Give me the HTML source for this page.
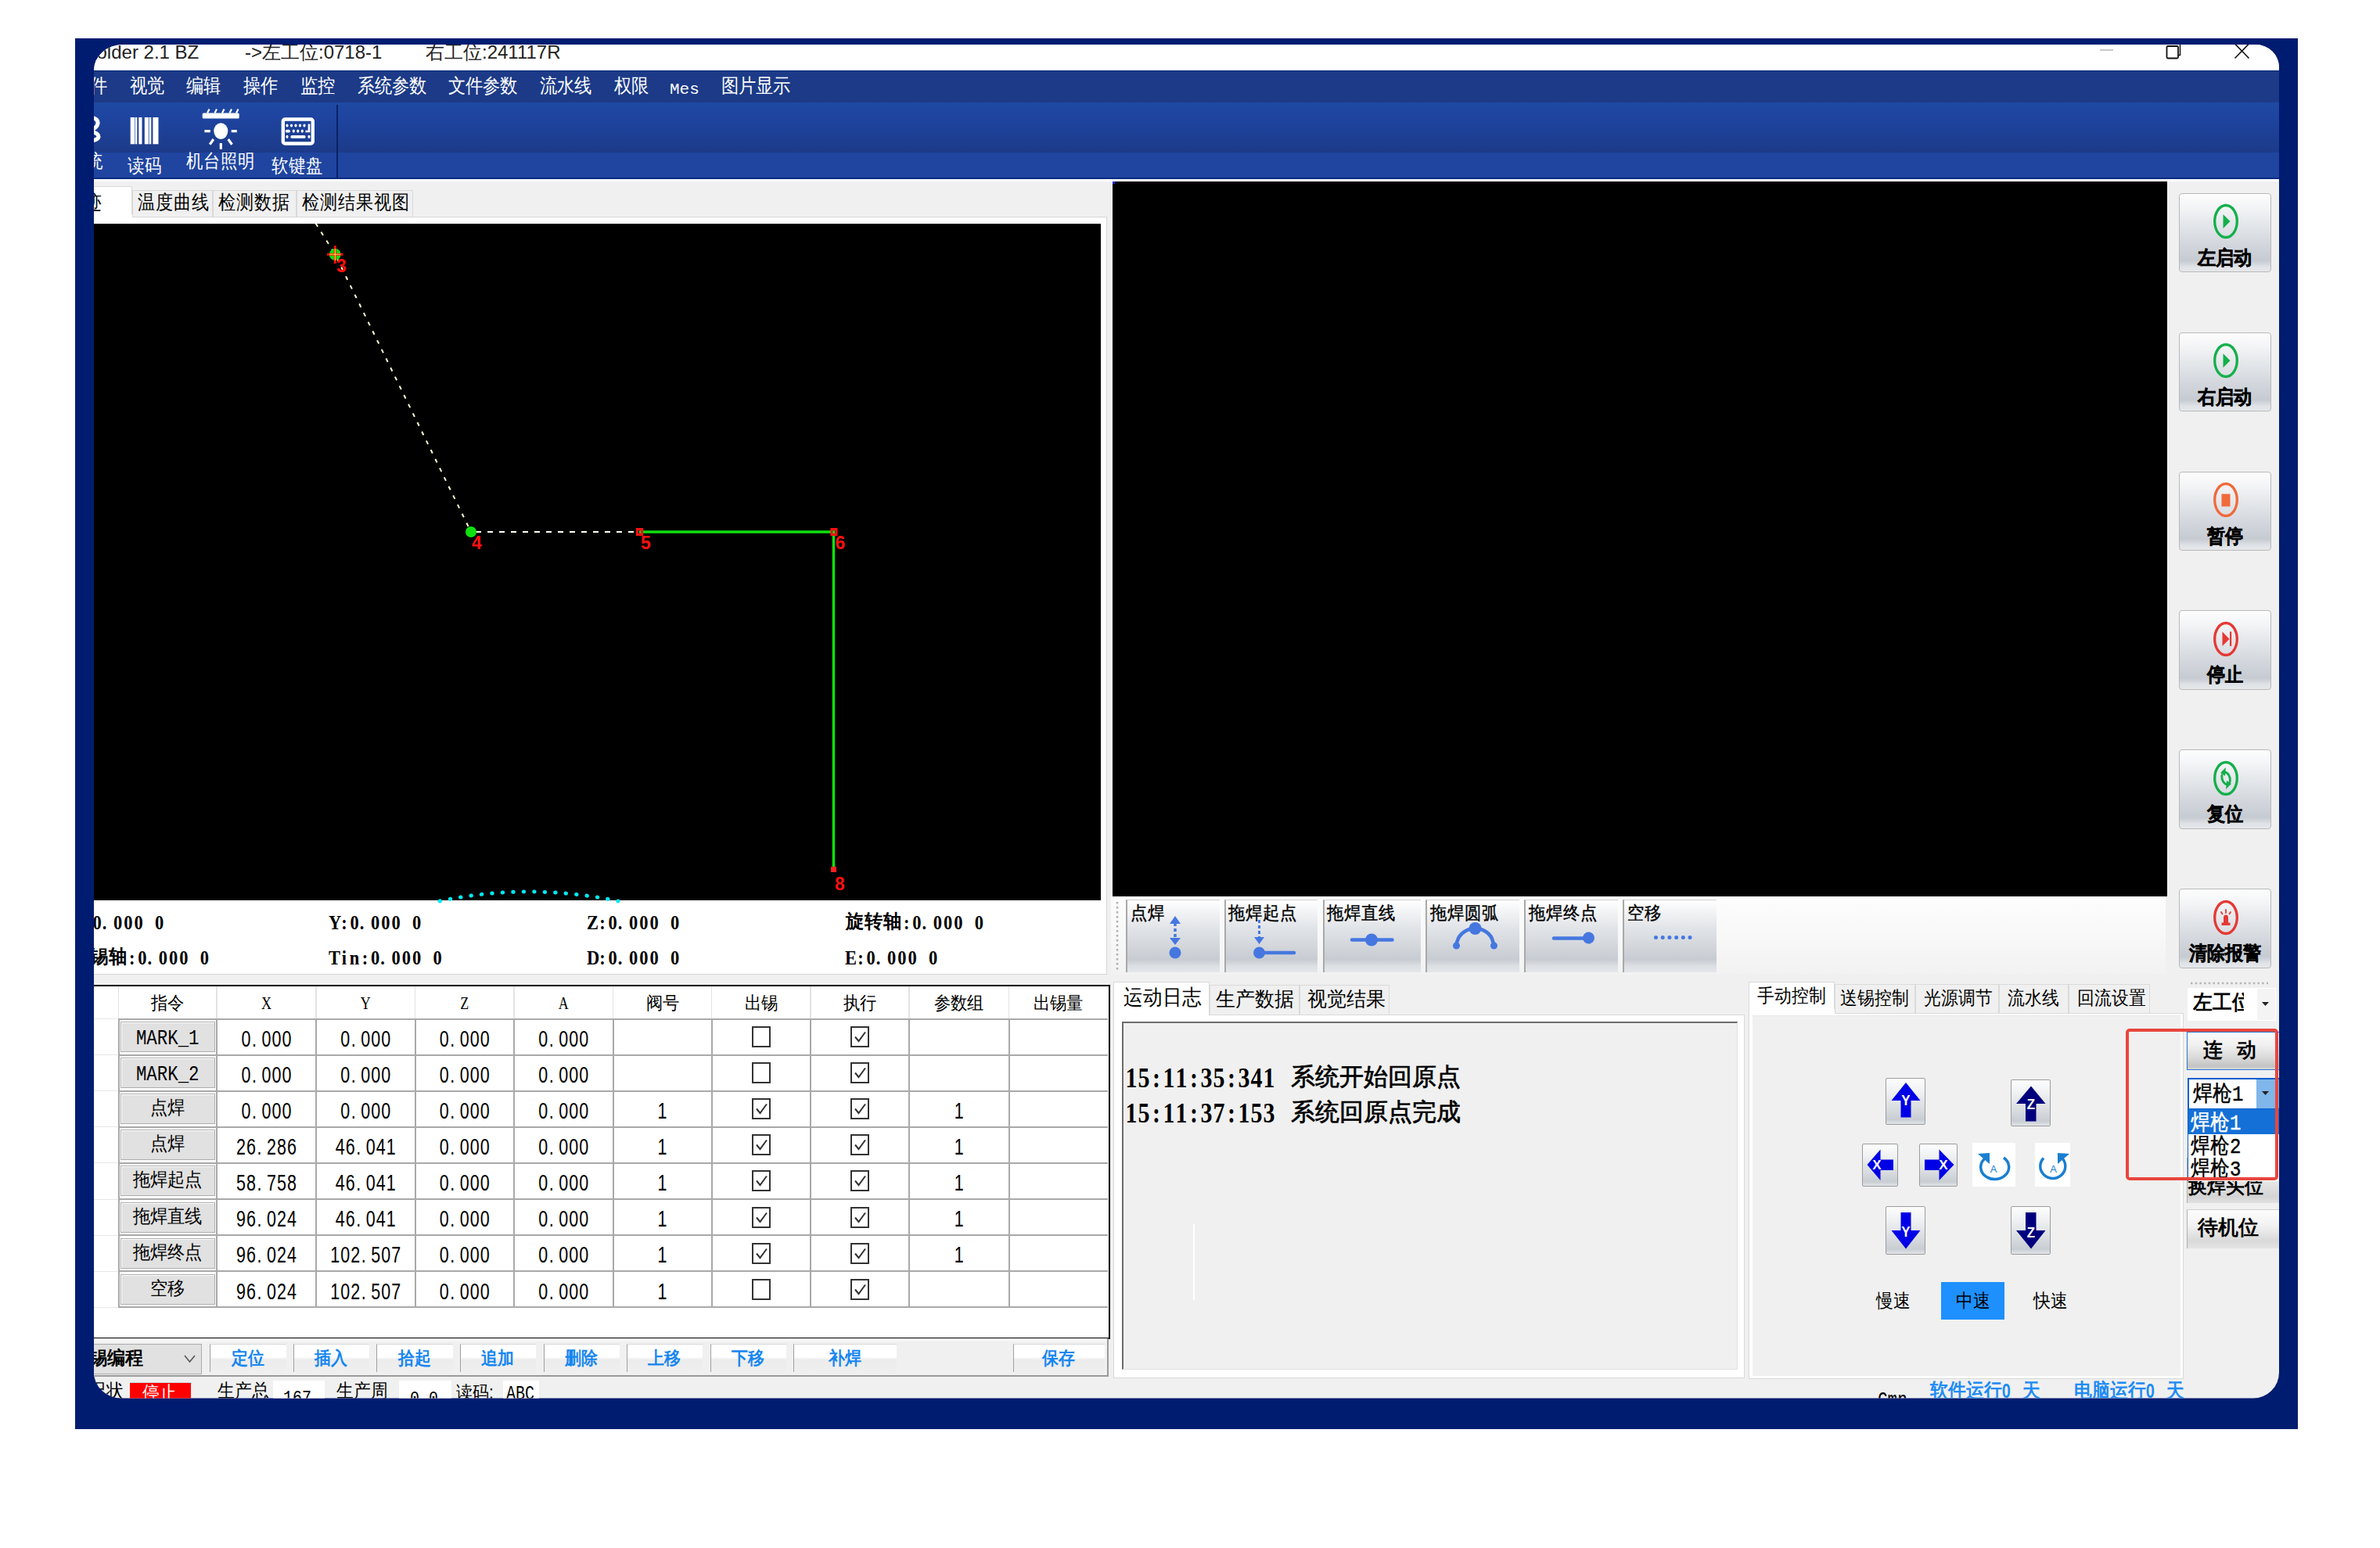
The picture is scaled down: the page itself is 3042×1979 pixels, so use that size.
<!DOCTYPE html>
<html><head><meta charset="utf-8">
<style>
*{box-sizing:border-box;margin:0;padding:0}
html,body{width:3042px;height:1979px;background:#fff;overflow:hidden;font-family:"Liberation Sans",sans-serif;color:#000}
.a{position:absolute;white-space:nowrap}
#frame{left:96px;top:49px;width:2841px;height:1778px;background:#001c70}
#app{left:0;top:0;width:3042px;height:1979px;background:#f0f0f0;clip-path:inset(57px 129px 191.5px 120px round 37px 30px 33px 35px / 33px 29px 33px 33px)}
.t{line-height:1}
.menu span{position:absolute;top:97.5px;font-size:22px;color:#fff;line-height:1;transform:scaleY(1.12);transform-origin:0 0}
.tl{position:absolute;color:#fff;font-size:21.5px;line-height:1;transform:scaleY(1.12);transform-origin:0 0}
.btn{position:absolute;border:1px solid #b4b4b4;border-radius:3px;background:linear-gradient(#fefefe 0%,#eceef1 35%,#d3d7dc 70%,#c4c9d0 88%,#e2e4e8 100%)}

.tabtxt{position:absolute;font-size:22.5px;line-height:1;transform:scaleY(1.13);transform-origin:0 0}
.tab{position:absolute;background:#f0f0f0;border:1px solid #d9d9d9;border-bottom:none}
.crd{position:absolute;font-family:"Liberation Serif",serif;font-weight:bold;font-size:22.5px;line-height:1;transform:scaleY(1.16);transform-origin:0 0;top:0}
.crd i{font-style:normal;display:inline-block;width:13.25px;text-align:center}
.cell{position:absolute;text-align:center;line-height:1}
.num{font-family:"Liberation Sans",sans-serif;font-size:21.5px;display:inline-block;transform:scaleY(1.34);transform-origin:50% 0}
.num i{font-style:normal;display:inline-block;width:13px;text-align:center}
.num i.d{text-align:left;padding-left:1px}
.hdr{font-size:21px;display:inline-block;transform:scaleY(1.08);transform-origin:50% 0}
.cmd{position:absolute;background:#e1e1e1;border:1.5px solid #adadad;box-shadow:inset 1px 1px 0 #fff}
.cmdt{font-size:22px;display:inline-block;transform:scaleY(1.08);transform-origin:50% 0}
.chk{position:absolute;width:24px;height:27px;border:2px solid #333;background:#fff}
.bb{position:absolute;top:1717.5px;height:36.5px;border-left:1.5px solid #a0a0a0;border-top:1.5px solid #d8d8d8;background:linear-gradient(#fff 0%,#fff 45%,#ececec 55%,#efefef 100%)}
.bbt{position:absolute;top:1723.5px;color:#1787f0;font-weight:bold;font-size:21px;line-height:1;transform:scaleY(1.1);transform-origin:0 0}

.rb{position:absolute;left:2784.5px;width:118px;height:101.5px;border:1.5px solid #b9b9b9;border-radius:4px;background:linear-gradient(#fdfdfd 0%,#f3f4f6 18%,#e3e6ea 40%,#d3d7dd 65%,#c6cbd2 86%,#dfe2e6 94%,#e6e8eb 100%)}
.rbt{position:absolute;font-weight:bold;-webkit-text-stroke:0.4px #000;font-size:23px;line-height:1;transform:scaleY(1.08);transform-origin:0 0;text-align:center;width:118px;left:2784.5px}
.wb{position:absolute;top:1150px;height:93px;border-left:2px solid #a9a9a9;border-top:1.5px solid #d0d0d0;background:linear-gradient(#ffffff 0%,#f3f4f6 15%,#e0e3e7 40%,#d2d6db 65%,#c7ccd2 82%,#dde0e4 92%,#e4e6e9 100%)}
.wbt{position:absolute;top:1157px;font-size:21.5px;line-height:1;transform:scaleY(1.08);transform-origin:0 0;-webkit-text-stroke:0.35px #000}
.mtab{position:absolute;background:#f0f0f0;border:1px solid #dadada;border-bottom:none}
.mtt{position:absolute;font-size:22.5px;line-height:1;transform:scaleY(1.1);transform-origin:0 0}
.ab{position:absolute;border:1px solid #9c9c9c;border-radius:2px;background:linear-gradient(#fdfdfd 0%,#eef0f2 30%,#d6dade 70%,#c8cdd3 90%,#e2e5e8 100%)}
</style></head><body>
<div class="a" id="frame"></div>
<div class="a" id="app">
<div class="a" style="left:0;top:0;width:3042px;height:90px;background:#fff"></div>
<div class="a t" style="left:107.5px;top:54.5px;font-size:24px;color:#222">Solder 2.1 BZ</div>
<div class="a t" style="left:313px;top:54.5px;font-size:24px;color:#222">->左工位:0718-1</div>
<div class="a t" style="left:544px;top:54.5px;font-size:24px;color:#222">右工位:241117R</div>
<div class="a" style="left:2684px;top:63px;width:17px;height:2px;background:#c8c8c8"></div>
<svg class="a" style="left:2760px;top:50px" width="40" height="30"><rect x="9.5" y="9" width="14.5" height="15.5" rx="1.5" fill="none" stroke="#111" stroke-width="1.8"/><path d="M24 4 L26.5 4 L26.5 20.5 L24 20.5" fill="none" stroke="#111" stroke-width="1.5"/></svg>
<svg class="a" style="left:2850px;top:50px" width="30" height="30"><path d="M6.5 24.5 L24.5 6 M6.5 6 L24.5 24.5" stroke="#111" stroke-width="1.6"/></svg>
<div class="a" style="left:0;top:89.5px;width:3042px;height:41.5px;background:#1c3a87;border-top:1.5px solid #062878"></div>
<div class="menu">
<span style="left:93px">文件</span>
<span style="left:166px">视觉</span>
<span style="left:238px">编辑</span>
<span style="left:311px">操作</span>
<span style="left:384px">监控</span>
<span style="left:457px">系统参数</span>
<span style="left:573px">文件参数</span>
<span style="left:690px">流水线</span>
<span style="left:785px">权限</span>
<span style="left:922px">图片显示</span>
<span style="left:856px;top:103.5px;font-family:'Liberation Mono';font-size:21px;transform:scaleY(1.0)">Mes</span>
</div>
<div class="a" style="left:0;top:131px;width:3042px;height:63.5px;background:linear-gradient(#1f49a2,#1e44a0 30%,#1c3a88)"></div>
<div class="a" style="left:0;top:194.5px;width:3042px;height:34px;background:#1f45a0;border-bottom:2px solid #0a2a80"></div>
<div class="a" style="left:0;top:228.5px;width:3042px;height:3.5px;background:#fff"></div>
<div class="a" style="left:430px;top:134px;width:1.5px;height:94px;background:#0b2266"></div>
<svg class="a" style="left:100px;top:148px" width="30" height="34"><path d="M6 3 C16 0 26 3 25 10 C24 15 20 17 12 19 M8 21 C18 19 26 22 26 27 C25 32 14 33 6 31" fill="none" stroke="#fff" stroke-width="5"/></svg>
<div class="tl" style="left:110px;top:195px">统</div>
<svg class="a" style="left:166px;top:150px" width="38" height="35"><g fill="#fff"><rect x="0.7" y="0" width="5.5" height="34.3"/><rect x="6.8" y="0" width="2.5" height="34.3"/><rect x="11.3" y="0" width="4.2" height="34.3"/><rect x="18.8" y="0" width="5" height="34.3"/><rect x="24.6" y="0" width="2.7" height="34.3"/><rect x="29.4" y="0" width="7.1" height="34.3"/></g></svg>
<div class="tl" style="left:163px;top:201px">读码</div>
<svg class="a" style="left:250px;top:135px" width="60" height="60"><g fill="#fff" stroke="#fff"><rect x="8.7" y="9.4" width="47" height="7" rx="1.5" stroke="none"/><path d="M15 9.5 L17.5 4.5 M24.5 9.5 L27 4.5 M34 9.5 L36.5 4.5 M43.5 9.5 L46 4.5 M52 9.5 L54.5 4.5" stroke-width="2.2"/><ellipse cx="32.3" cy="32.6" rx="9" ry="10.3" stroke="none"/><path d="M11.4 32.6 L18.8 32.6 M45.7 32.6 L52.8 32.6 M18.2 49.7 L22.9 43 M46.5 49.7 L41.7 43 M32.3 48 L32.3 55.8" stroke-width="3.2"/></g></svg>
<div class="tl" style="left:238px;top:194.5px">机台照明</div>
<svg class="a" style="left:350px;top:140px" width="60" height="52"><rect x="11.8" y="12.5" width="38" height="31" rx="2.5" fill="none" stroke="#fff" stroke-width="4.4"/><g fill="#fff"><ellipse cx="17" cy="20.5" rx="1.6" ry="2.1"/><ellipse cx="22.5" cy="20.5" rx="1.6" ry="2.1"/><ellipse cx="28" cy="20.5" rx="1.6" ry="2.1"/><ellipse cx="33.5" cy="20.5" rx="1.6" ry="2.1"/><ellipse cx="39" cy="20.5" rx="1.6" ry="2.1"/><rect x="14.8" y="25.8" width="6" height="3.6" rx="1.5"/><ellipse cx="25.3" cy="27.6" rx="1.6" ry="2.1"/><ellipse cx="30.8" cy="27.6" rx="1.6" ry="2.1"/><ellipse cx="36.3" cy="27.6" rx="1.6" ry="2.1"/><ellipse cx="17" cy="34.8" rx="1.6" ry="2.1"/><rect x="21.5" y="33" width="19" height="3.8" rx="1.5"/><ellipse cx="45" cy="34.8" rx="1.6" ry="2.1"/></g><path d="M45 18.5 L45 28 L40.5 28" fill="none" stroke="#fff" stroke-width="2.6"/></svg>
<div class="tl" style="left:347px;top:201px">软键盘</div>
<div class="a" style="left:120px;top:238px;width:49px;height:42px;background:#fff;border-top:1px solid #d9d9d9;border-right:1px solid #d9d9d9"></div>
<div class="tabtxt" style="left:85px;top:246.5px">轨迹</div>
<div class="tab" style="left:169px;top:242.5px;width:103px;height:35.5px"></div>
<div class="tabtxt" style="left:176px;top:247px">温度曲线</div>
<div class="tab" style="left:272px;top:242.5px;width:106.5px;height:35.5px"></div>
<div class="tabtxt" style="left:279px;top:247px">检测数据</div>
<div class="tab" style="left:378.5px;top:242.5px;width:149.0px;height:35.5px"></div>
<div class="tabtxt" style="left:385.5px;top:247px">检测结果视图</div>
<div class="a" style="left:110px;top:277px;width:1304.5px;height:969px;background:#fff;border:1px solid #d6d6d6"></div>
<div class="a" style="left:120px;top:274px;width:48.5px;height:6px;background:#fff"></div>
<div class="a" style="left:110px;top:285.5px;width:1297px;height:865.5px;background:#000"></div>
<svg class="a" style="left:0;top:0" width="1420" height="1160">
<g fill="none">
<path d="M403.5 285.5 L428.3 325.2 L602 680" stroke="#ffffd0" stroke-width="2" stroke-dasharray="5 8"/>
<path d="M608 680 L815 680" stroke="#fffff0" stroke-width="2.2" stroke-dasharray="7 8"/>
<path d="M817 680 L1065.5 680 L1065.5 1112" stroke="#10e010" stroke-width="3.5"/>
<path d="M562 1152 Q 675 1128 790 1152" stroke="#00e8f0" stroke-width="5" stroke-dasharray="0.5 13" stroke-linecap="round"/>
</g>
<circle cx="428.3" cy="325.2" r="7.5" fill="#10e010"/>
<path d="M418 325.2 L438.5 325.2 M428.3 314 L428.3 337" stroke="#ff0a0a" stroke-width="3"/>
<path d="M421 325.2 L435.5 325.2 M428.3 318 L428.3 333" stroke="#ffff40" stroke-width="1"/>
<circle cx="602" cy="680" r="7" fill="#10e010"/>
<rect x="814.5" y="676.5" width="6" height="7" fill="none" stroke="#ff1010" stroke-width="3"/>
<rect x="1063" y="676.5" width="6" height="7" fill="none" stroke="#ff1010" stroke-width="3"/>
<rect x="1062" y="1108" width="7" height="7" fill="#ff2020"/>
<g fill="#ff1010" font-family="Liberation Sans" font-weight="bold" font-size="23">
<text x="430" y="347.5">3</text><text x="603" y="701.5">4</text><text x="819" y="701.5">5</text><text x="1067.5" y="701.5">6</text><text x="1067" y="1137.5">8</text>
</g>
</svg>
<div class="a" style="left:91px;top:1171.5px;line-height:1"><span class="crd" style="left:0.0px;top:-4.5px"><i>X</i><i>:</i><i>0</i><i style="text-align:left">.</i><i>0</i><i>0</i><i>0</i><i>&nbsp;</i><i>0</i></span></div>
<div class="a" style="left:420px;top:1171.5px;line-height:1"><span class="crd" style="left:0.0px;top:-4.5px"><i>Y</i><i>:</i><i>0</i><i style="text-align:left">.</i><i>0</i><i>0</i><i>0</i><i>&nbsp;</i><i>0</i></span></div>
<div class="a" style="left:750px;top:1171.5px;line-height:1"><span class="crd" style="left:0.0px;top:-4.5px"><i>Z</i><i>:</i><i>0</i><i style="text-align:left">.</i><i>0</i><i>0</i><i>0</i><i>&nbsp;</i><i>0</i></span></div>
<div class="a" style="left:1081px;top:1171.5px;line-height:1"><span style="position:absolute;left:0;top:-6px;font-size:23.5px;font-weight:bold;line-height:1;transform:scaleY(1.03);transform-origin:0 0">旋转轴</span><span class="crd" style="left:71.1px;top:-4.5px"><i>:</i><i>0</i><i style="text-align:left">.</i><i>0</i><i>0</i><i>0</i><i>&nbsp;</i><i>0</i></span></div>
<div class="a" style="left:91px;top:1216.5px;line-height:1"><span style="position:absolute;left:0;top:-6px;font-size:23.5px;font-weight:bold;line-height:1;transform:scaleY(1.03);transform-origin:0 0">出锡轴</span><span class="crd" style="left:71.1px;top:-4.5px"><i>:</i><i>0</i><i style="text-align:left">.</i><i>0</i><i>0</i><i>0</i><i>&nbsp;</i><i>0</i></span></div>
<div class="a" style="left:420px;top:1216.5px;line-height:1"><span class="crd" style="left:0.0px;top:-4.5px"><i>T</i><i>i</i><i>n</i><i>:</i><i>0</i><i style="text-align:left">.</i><i>0</i><i>0</i><i>0</i><i>&nbsp;</i><i>0</i></span></div>
<div class="a" style="left:750px;top:1216.5px;line-height:1"><span class="crd" style="left:0.0px;top:-4.5px"><i>D</i><i>:</i><i>0</i><i style="text-align:left">.</i><i>0</i><i>0</i><i>0</i><i>&nbsp;</i><i>0</i></span></div>
<div class="a" style="left:1080px;top:1216.5px;line-height:1"><span class="crd" style="left:0.0px;top:-4.5px"><i>E</i><i>:</i><i>0</i><i style="text-align:left">.</i><i>0</i><i>0</i><i>0</i><i>&nbsp;</i><i>0</i></span></div>
<div class="a" style="left:110px;top:1246px;width:1310px;height:12.5px;background:#f0f0f0"></div>
<div class="a" style="left:100px;top:1258.5px;width:1318.5px;height:1453px;height:453px;background:#fff;border:2.5px solid #000"></div>
<div class="a" style="left:150.5px;top:1261px;width:1.5px;height:41px;background:#e3e3e3"></div>
<div class="a" style="left:276px;top:1261px;width:1.5px;height:41px;background:#e3e3e3"></div>
<div class="a" style="left:403px;top:1261px;width:1.5px;height:41px;background:#e3e3e3"></div>
<div class="a" style="left:529.5px;top:1261px;width:1.5px;height:41px;background:#e3e3e3"></div>
<div class="a" style="left:656px;top:1261px;width:1.5px;height:41px;background:#e3e3e3"></div>
<div class="a" style="left:782.5px;top:1261px;width:1.5px;height:41px;background:#e3e3e3"></div>
<div class="a" style="left:908.5px;top:1261px;width:1.5px;height:41px;background:#e3e3e3"></div>
<div class="a" style="left:1035px;top:1261px;width:1.5px;height:41px;background:#e3e3e3"></div>
<div class="a" style="left:1161px;top:1261px;width:1.5px;height:41px;background:#e3e3e3"></div>
<div class="a" style="left:1288.5px;top:1261px;width:1.5px;height:41px;background:#e3e3e3"></div>
<div class="a" style="left:151px;top:1301.5px;width:1265px;height:2px;background:#a9a9a9"></div>
<div class="a" style="left:110px;top:1302.0px;width:41px;height:1px;background:#e6e6e6"></div>
<div class="a" style="left:151px;top:1347.6px;width:1265px;height:2px;background:#a9a9a9"></div>
<div class="a" style="left:110px;top:1348.1px;width:41px;height:1px;background:#e6e6e6"></div>
<div class="a" style="left:151px;top:1393.7px;width:1265px;height:2px;background:#a9a9a9"></div>
<div class="a" style="left:110px;top:1394.2px;width:41px;height:1px;background:#e6e6e6"></div>
<div class="a" style="left:151px;top:1439.8px;width:1265px;height:2px;background:#a9a9a9"></div>
<div class="a" style="left:110px;top:1440.3px;width:41px;height:1px;background:#e6e6e6"></div>
<div class="a" style="left:151px;top:1485.9px;width:1265px;height:2px;background:#a9a9a9"></div>
<div class="a" style="left:110px;top:1486.4px;width:41px;height:1px;background:#e6e6e6"></div>
<div class="a" style="left:151px;top:1532.0px;width:1265px;height:2px;background:#a9a9a9"></div>
<div class="a" style="left:110px;top:1532.5px;width:41px;height:1px;background:#e6e6e6"></div>
<div class="a" style="left:151px;top:1578.1px;width:1265px;height:2px;background:#a9a9a9"></div>
<div class="a" style="left:110px;top:1578.6px;width:41px;height:1px;background:#e6e6e6"></div>
<div class="a" style="left:151px;top:1624.2px;width:1265px;height:2px;background:#a9a9a9"></div>
<div class="a" style="left:110px;top:1624.7px;width:41px;height:1px;background:#e6e6e6"></div>
<div class="a" style="left:151px;top:1670.3px;width:1265px;height:2px;background:#a9a9a9"></div>
<div class="a" style="left:110px;top:1670.8px;width:41px;height:1px;background:#e6e6e6"></div>
<div class="a" style="left:150.5px;top:1302.5px;width:2px;height:368.8px;background:#a9a9a9"></div>
<div class="a" style="left:276px;top:1302.5px;width:2px;height:368.8px;background:#a9a9a9"></div>
<div class="a" style="left:403px;top:1302.5px;width:2px;height:368.8px;background:#a9a9a9"></div>
<div class="a" style="left:529.5px;top:1302.5px;width:2px;height:368.8px;background:#a9a9a9"></div>
<div class="a" style="left:656px;top:1302.5px;width:2px;height:368.8px;background:#a9a9a9"></div>
<div class="a" style="left:782.5px;top:1302.5px;width:2px;height:368.8px;background:#a9a9a9"></div>
<div class="a" style="left:908.5px;top:1302.5px;width:2px;height:368.8px;background:#a9a9a9"></div>
<div class="a" style="left:1035px;top:1302.5px;width:2px;height:368.8px;background:#a9a9a9"></div>
<div class="a" style="left:1161px;top:1302.5px;width:2px;height:368.8px;background:#a9a9a9"></div>
<div class="a" style="left:1288.5px;top:1302.5px;width:2px;height:368.8px;background:#a9a9a9"></div>
<div class="cell" style="left:151.5px;top:1270.5px;width:125.5px"><span class="hdr">指令</span></div>
<div class="cell" style="left:277px;top:1271.4px;width:127px"><span style="font-family:Liberation Serif,serif;font-size:18px;display:inline-block;transform:scaleY(1.27);transform-origin:50% 0">X</span></div>
<div class="cell" style="left:404px;top:1271.4px;width:126.5px"><span style="font-family:Liberation Serif,serif;font-size:18px;display:inline-block;transform:scaleY(1.27);transform-origin:50% 0">Y</span></div>
<div class="cell" style="left:530.5px;top:1271.4px;width:126.5px"><span style="font-family:Liberation Serif,serif;font-size:18px;display:inline-block;transform:scaleY(1.27);transform-origin:50% 0">Z</span></div>
<div class="cell" style="left:657px;top:1271.4px;width:126.5px"><span style="font-family:Liberation Serif,serif;font-size:18px;display:inline-block;transform:scaleY(1.27);transform-origin:50% 0">A</span></div>
<div class="cell" style="left:783.5px;top:1270.5px;width:126.0px"><span class="hdr">阀号</span></div>
<div class="cell" style="left:909.5px;top:1270.5px;width:126.5px"><span class="hdr">出锡</span></div>
<div class="cell" style="left:1036px;top:1270.5px;width:126px"><span class="hdr">执行</span></div>
<div class="cell" style="left:1162px;top:1270.5px;width:127.5px"><span class="hdr">参数组</span></div>
<div class="cell" style="left:1289.5px;top:1270.5px;width:126.5px"><span class="hdr">出锡量</span></div>
<div class="cmd" style="left:153.5px;top:1306.0px;width:121.5px;height:39.1px"></div>
<div class="cell" style="left:151.5px;top:1313.5px;width:125.5px"><span style="font-family:Liberation Mono,monospace;font-size:22.4px;display:inline-block;transform:scaleY(1.25);transform-origin:50% 0">MARK_1</span></div>
<div class="cell" style="left:277px;top:1314.8px;width:127px"><span class="num"><i>0</i><i class="d">.</i><i>0</i><i>0</i><i>0</i></span></div>
<div class="cell" style="left:404px;top:1314.8px;width:126.5px"><span class="num"><i>0</i><i class="d">.</i><i>0</i><i>0</i><i>0</i></span></div>
<div class="cell" style="left:530.5px;top:1314.8px;width:126.5px"><span class="num"><i>0</i><i class="d">.</i><i>0</i><i>0</i><i>0</i></span></div>
<div class="cell" style="left:657px;top:1314.8px;width:126.5px"><span class="num"><i>0</i><i class="d">.</i><i>0</i><i>0</i><i>0</i></span></div>
<div class="chk" style="left:960.75px;top:1312.0px"></div>
<div class="chk" style="left:1087.0px;top:1312.0px"><svg width="20" height="23" style="position:absolute;left:0;top:0"><path d="M4 11.5 L8.5 17 L17 5.5" fill="none" stroke="#333" stroke-width="2"/></svg></div>
<div class="cmd" style="left:153.5px;top:1352.1px;width:121.5px;height:39.1px"></div>
<div class="cell" style="left:151.5px;top:1359.6px;width:125.5px"><span style="font-family:Liberation Mono,monospace;font-size:22.4px;display:inline-block;transform:scaleY(1.25);transform-origin:50% 0">MARK_2</span></div>
<div class="cell" style="left:277px;top:1360.8999999999999px;width:127px"><span class="num"><i>0</i><i class="d">.</i><i>0</i><i>0</i><i>0</i></span></div>
<div class="cell" style="left:404px;top:1360.8999999999999px;width:126.5px"><span class="num"><i>0</i><i class="d">.</i><i>0</i><i>0</i><i>0</i></span></div>
<div class="cell" style="left:530.5px;top:1360.8999999999999px;width:126.5px"><span class="num"><i>0</i><i class="d">.</i><i>0</i><i>0</i><i>0</i></span></div>
<div class="cell" style="left:657px;top:1360.8999999999999px;width:126.5px"><span class="num"><i>0</i><i class="d">.</i><i>0</i><i>0</i><i>0</i></span></div>
<div class="chk" style="left:960.75px;top:1358.1px"></div>
<div class="chk" style="left:1087.0px;top:1358.1px"><svg width="20" height="23" style="position:absolute;left:0;top:0"><path d="M4 11.5 L8.5 17 L17 5.5" fill="none" stroke="#333" stroke-width="2"/></svg></div>
<div class="cmd" style="left:153.5px;top:1398.2px;width:121.5px;height:39.1px"></div>
<div class="cell" style="left:151.5px;top:1405.2px;width:125.5px"><span class="cmdt">点焊</span></div>
<div class="cell" style="left:277px;top:1407.0px;width:127px"><span class="num"><i>0</i><i class="d">.</i><i>0</i><i>0</i><i>0</i></span></div>
<div class="cell" style="left:404px;top:1407.0px;width:126.5px"><span class="num"><i>0</i><i class="d">.</i><i>0</i><i>0</i><i>0</i></span></div>
<div class="cell" style="left:530.5px;top:1407.0px;width:126.5px"><span class="num"><i>0</i><i class="d">.</i><i>0</i><i>0</i><i>0</i></span></div>
<div class="cell" style="left:657px;top:1407.0px;width:126.5px"><span class="num"><i>0</i><i class="d">.</i><i>0</i><i>0</i><i>0</i></span></div>
<div class="cell" style="left:783.5px;top:1407.0px;width:126.0px"><span class="num"><i>1</i></span></div>
<div class="chk" style="left:960.75px;top:1404.2px"><svg width="20" height="23" style="position:absolute;left:0;top:0"><path d="M4 11.5 L8.5 17 L17 5.5" fill="none" stroke="#333" stroke-width="2"/></svg></div>
<div class="chk" style="left:1087.0px;top:1404.2px"><svg width="20" height="23" style="position:absolute;left:0;top:0"><path d="M4 11.5 L8.5 17 L17 5.5" fill="none" stroke="#333" stroke-width="2"/></svg></div>
<div class="cell" style="left:1162px;top:1407.0px;width:127.5px"><span class="num"><i>1</i></span></div>
<div class="cmd" style="left:153.5px;top:1444.3px;width:121.5px;height:39.1px"></div>
<div class="cell" style="left:151.5px;top:1451.3px;width:125.5px"><span class="cmdt">点焊</span></div>
<div class="cell" style="left:277px;top:1453.1px;width:127px"><span class="num"><i>2</i><i>6</i><i class="d">.</i><i>2</i><i>8</i><i>6</i></span></div>
<div class="cell" style="left:404px;top:1453.1px;width:126.5px"><span class="num"><i>4</i><i>6</i><i class="d">.</i><i>0</i><i>4</i><i>1</i></span></div>
<div class="cell" style="left:530.5px;top:1453.1px;width:126.5px"><span class="num"><i>0</i><i class="d">.</i><i>0</i><i>0</i><i>0</i></span></div>
<div class="cell" style="left:657px;top:1453.1px;width:126.5px"><span class="num"><i>0</i><i class="d">.</i><i>0</i><i>0</i><i>0</i></span></div>
<div class="cell" style="left:783.5px;top:1453.1px;width:126.0px"><span class="num"><i>1</i></span></div>
<div class="chk" style="left:960.75px;top:1450.3px"><svg width="20" height="23" style="position:absolute;left:0;top:0"><path d="M4 11.5 L8.5 17 L17 5.5" fill="none" stroke="#333" stroke-width="2"/></svg></div>
<div class="chk" style="left:1087.0px;top:1450.3px"><svg width="20" height="23" style="position:absolute;left:0;top:0"><path d="M4 11.5 L8.5 17 L17 5.5" fill="none" stroke="#333" stroke-width="2"/></svg></div>
<div class="cell" style="left:1162px;top:1453.1px;width:127.5px"><span class="num"><i>1</i></span></div>
<div class="cmd" style="left:153.5px;top:1490.4px;width:121.5px;height:39.1px"></div>
<div class="cell" style="left:151.5px;top:1497.4px;width:125.5px"><span class="cmdt">拖焊起点</span></div>
<div class="cell" style="left:277px;top:1499.2px;width:127px"><span class="num"><i>5</i><i>8</i><i class="d">.</i><i>7</i><i>5</i><i>8</i></span></div>
<div class="cell" style="left:404px;top:1499.2px;width:126.5px"><span class="num"><i>4</i><i>6</i><i class="d">.</i><i>0</i><i>4</i><i>1</i></span></div>
<div class="cell" style="left:530.5px;top:1499.2px;width:126.5px"><span class="num"><i>0</i><i class="d">.</i><i>0</i><i>0</i><i>0</i></span></div>
<div class="cell" style="left:657px;top:1499.2px;width:126.5px"><span class="num"><i>0</i><i class="d">.</i><i>0</i><i>0</i><i>0</i></span></div>
<div class="cell" style="left:783.5px;top:1499.2px;width:126.0px"><span class="num"><i>1</i></span></div>
<div class="chk" style="left:960.75px;top:1496.4px"><svg width="20" height="23" style="position:absolute;left:0;top:0"><path d="M4 11.5 L8.5 17 L17 5.5" fill="none" stroke="#333" stroke-width="2"/></svg></div>
<div class="chk" style="left:1087.0px;top:1496.4px"><svg width="20" height="23" style="position:absolute;left:0;top:0"><path d="M4 11.5 L8.5 17 L17 5.5" fill="none" stroke="#333" stroke-width="2"/></svg></div>
<div class="cell" style="left:1162px;top:1499.2px;width:127.5px"><span class="num"><i>1</i></span></div>
<div class="cmd" style="left:153.5px;top:1536.5px;width:121.5px;height:39.1px"></div>
<div class="cell" style="left:151.5px;top:1543.5px;width:125.5px"><span class="cmdt">拖焊直线</span></div>
<div class="cell" style="left:277px;top:1545.3px;width:127px"><span class="num"><i>9</i><i>6</i><i class="d">.</i><i>0</i><i>2</i><i>4</i></span></div>
<div class="cell" style="left:404px;top:1545.3px;width:126.5px"><span class="num"><i>4</i><i>6</i><i class="d">.</i><i>0</i><i>4</i><i>1</i></span></div>
<div class="cell" style="left:530.5px;top:1545.3px;width:126.5px"><span class="num"><i>0</i><i class="d">.</i><i>0</i><i>0</i><i>0</i></span></div>
<div class="cell" style="left:657px;top:1545.3px;width:126.5px"><span class="num"><i>0</i><i class="d">.</i><i>0</i><i>0</i><i>0</i></span></div>
<div class="cell" style="left:783.5px;top:1545.3px;width:126.0px"><span class="num"><i>1</i></span></div>
<div class="chk" style="left:960.75px;top:1542.5px"><svg width="20" height="23" style="position:absolute;left:0;top:0"><path d="M4 11.5 L8.5 17 L17 5.5" fill="none" stroke="#333" stroke-width="2"/></svg></div>
<div class="chk" style="left:1087.0px;top:1542.5px"><svg width="20" height="23" style="position:absolute;left:0;top:0"><path d="M4 11.5 L8.5 17 L17 5.5" fill="none" stroke="#333" stroke-width="2"/></svg></div>
<div class="cell" style="left:1162px;top:1545.3px;width:127.5px"><span class="num"><i>1</i></span></div>
<div class="cmd" style="left:153.5px;top:1582.6px;width:121.5px;height:39.1px"></div>
<div class="cell" style="left:151.5px;top:1589.6px;width:125.5px"><span class="cmdt">拖焊终点</span></div>
<div class="cell" style="left:277px;top:1591.3999999999999px;width:127px"><span class="num"><i>9</i><i>6</i><i class="d">.</i><i>0</i><i>2</i><i>4</i></span></div>
<div class="cell" style="left:404px;top:1591.3999999999999px;width:126.5px"><span class="num"><i>1</i><i>0</i><i>2</i><i class="d">.</i><i>5</i><i>0</i><i>7</i></span></div>
<div class="cell" style="left:530.5px;top:1591.3999999999999px;width:126.5px"><span class="num"><i>0</i><i class="d">.</i><i>0</i><i>0</i><i>0</i></span></div>
<div class="cell" style="left:657px;top:1591.3999999999999px;width:126.5px"><span class="num"><i>0</i><i class="d">.</i><i>0</i><i>0</i><i>0</i></span></div>
<div class="cell" style="left:783.5px;top:1591.3999999999999px;width:126.0px"><span class="num"><i>1</i></span></div>
<div class="chk" style="left:960.75px;top:1588.6px"><svg width="20" height="23" style="position:absolute;left:0;top:0"><path d="M4 11.5 L8.5 17 L17 5.5" fill="none" stroke="#333" stroke-width="2"/></svg></div>
<div class="chk" style="left:1087.0px;top:1588.6px"><svg width="20" height="23" style="position:absolute;left:0;top:0"><path d="M4 11.5 L8.5 17 L17 5.5" fill="none" stroke="#333" stroke-width="2"/></svg></div>
<div class="cell" style="left:1162px;top:1591.3999999999999px;width:127.5px"><span class="num"><i>1</i></span></div>
<div class="cmd" style="left:153.5px;top:1628.7px;width:121.5px;height:39.1px"></div>
<div class="cell" style="left:151.5px;top:1635.7px;width:125.5px"><span class="cmdt">空移</span></div>
<div class="cell" style="left:277px;top:1637.5px;width:127px"><span class="num"><i>9</i><i>6</i><i class="d">.</i><i>0</i><i>2</i><i>4</i></span></div>
<div class="cell" style="left:404px;top:1637.5px;width:126.5px"><span class="num"><i>1</i><i>0</i><i>2</i><i class="d">.</i><i>5</i><i>0</i><i>7</i></span></div>
<div class="cell" style="left:530.5px;top:1637.5px;width:126.5px"><span class="num"><i>0</i><i class="d">.</i><i>0</i><i>0</i><i>0</i></span></div>
<div class="cell" style="left:657px;top:1637.5px;width:126.5px"><span class="num"><i>0</i><i class="d">.</i><i>0</i><i>0</i><i>0</i></span></div>
<div class="cell" style="left:783.5px;top:1637.5px;width:126.0px"><span class="num"><i>1</i></span></div>
<div class="chk" style="left:960.75px;top:1634.7px"></div>
<div class="chk" style="left:1087.0px;top:1634.7px"><svg width="20" height="23" style="position:absolute;left:0;top:0"><path d="M4 11.5 L8.5 17 L17 5.5" fill="none" stroke="#333" stroke-width="2"/></svg></div>
<div class="a" style="left:110px;top:1711px;width:1307px;height:48.5px;background:#f0f0f0;border-bottom:2px solid #9a9a9a;border-right:2px solid #9a9a9a;box-shadow:inset 0 4px 0 #f8f8f8"></div>
<div class="a" style="left:110px;top:1718px;width:148px;height:38.5px;background:#e1e1e1;border:1.5px solid #adadad"></div>
<div class="a t" style="left:91px;top:1724px;font-size:23px;font-weight:bold;transform:scaleY(1.04);transform-origin:0 0">出锡编程</div>
<svg class="a" style="left:234px;top:1731px" width="18" height="13"><path d="M2 2 L8.5 10 L15 2" fill="none" stroke="#555" stroke-width="1.6"/></svg>
<div class="bb" style="left:268px;width:97.5px"></div>
<div class="bbt" style="left:295.75px">定位</div>
<div class="bb" style="left:374.5px;width:97.5px"></div>
<div class="bbt" style="left:402.25px">插入</div>
<div class="bb" style="left:481px;width:97.5px"></div>
<div class="bbt" style="left:508.75px">拾起</div>
<div class="bb" style="left:587.5px;width:97.5px"></div>
<div class="bbt" style="left:615.25px">追加</div>
<div class="bb" style="left:694.5px;width:97.5px"></div>
<div class="bbt" style="left:722.25px">删除</div>
<div class="bb" style="left:800.5px;width:97.5px"></div>
<div class="bbt" style="left:828.25px">上移</div>
<div class="bb" style="left:907.5px;width:97.5px"></div>
<div class="bbt" style="left:935.25px">下移</div>
<div class="bb" style="left:1013.5px;width:132.0px"></div>
<div class="bbt" style="left:1058.5px">补焊</div>
<div class="bb" style="left:1294.5px;width:117.5px"></div>
<div class="bbt" style="left:1332.25px">保存</div>
<div class="a" style="left:166px;top:1767px;width:78px;height:30px;background:#ff0000;border-top:1.5px solid #c8dede"></div>
<div class="a t" style="left:182px;top:1768.5px;font-size:22px;color:#fff;transform:scaleY(1.1);transform-origin:0 0">停止</div>
<div class="a t" style="left:92px;top:1765.5px;font-size:22px;transform:scaleY(1.1);transform-origin:0 0">工况状</div>
<div class="a t" style="left:278px;top:1765.5px;font-size:22px;transform:scaleY(1.1);transform-origin:0 0">生产总</div>
<div class="a" style="left:349px;top:1765px;width:65.5px;height:30px;background:#fff"></div>
<div class="a t" style="left:362px;top:1775.5px;font-family:Liberation Mono;font-size:20px;transform:scaleY(1.2);transform-origin:0 0">167</div>
<div class="a t" style="left:429.5px;top:1765.5px;font-size:22px;transform:scaleY(1.1);transform-origin:0 0">生产周</div>
<div class="a" style="left:510px;top:1765px;width:67px;height:30px;background:#fff"></div>
<div class="a t" style="left:524px;top:1776.5px;font-family:Liberation Mono;font-size:20px;transform:scaleY(1.2);transform-origin:0 0">0.0</div>
<div class="a t" style="left:583px;top:1767.5px;font-size:21px;transform:scaleY(1.1);transform-origin:0 0">读码:</div>
<div class="a" style="left:642.5px;top:1765px;width:46.5px;height:30px;background:#fff"></div>
<div class="a t" style="left:647px;top:1769.5px;font-family:Liberation Mono;font-size:20px;transform:scaleY(1.25);transform-origin:0 0">ABC</div>
<div class="a" style="left:1422px;top:232px;width:1348px;height:914px;background:#000"></div>
<div class="a" style="left:1422px;top:232px;width:3px;height:3px;background:#2020ff"></div>
<div class="rb" style="top:246.5px"></div>
<svg class="a" style="left:2824.5px;top:258.0px" width="40" height="50"><g transform="translate(20,25)"><ellipse cx="0" cy="0" rx="14.3" ry="20.5" fill="none" stroke="#13b04a" stroke-width="3.3"/><path d="M-3.5 -9 L5.5 0 L-3.5 9 Z" fill="#13b04a"/></g></svg>
<div class="rbt" style="top:316.5px">左启动</div>
<div class="rb" style="top:424.5px"></div>
<svg class="a" style="left:2824.5px;top:436.0px" width="40" height="50"><g transform="translate(20,25)"><ellipse cx="0" cy="0" rx="14.3" ry="20.5" fill="none" stroke="#13b04a" stroke-width="3.3"/><path d="M-3.5 -9 L5.5 0 L-3.5 9 Z" fill="#13b04a"/></g></svg>
<div class="rbt" style="top:494.5px">右启动</div>
<div class="rb" style="top:602.5px"></div>
<svg class="a" style="left:2824.5px;top:614.0px" width="40" height="50"><g transform="translate(20,25)"><ellipse cx="0" cy="0" rx="14.3" ry="20.5" fill="none" stroke="#f06a3a" stroke-width="3.3"/><rect x="-5.5" y="-7.5" width="11" height="16" fill="#f06a3a"/></g></svg>
<div class="rbt" style="top:672.5px">暂停</div>
<div class="rb" style="top:780px"></div>
<svg class="a" style="left:2824.5px;top:791.5px" width="40" height="50"><g transform="translate(20,25)"><ellipse cx="0" cy="0" rx="14.3" ry="20.5" fill="none" stroke="#e53935" stroke-width="3.3"/><path d="M-4.5 -9.5 L4.5 0 L-4.5 9 Z" fill="#e53935"/><rect x="5" y="-9.5" width="2.2" height="18.5" fill="#e53935"/></g></svg>
<div class="rbt" style="top:850px">停止</div>
<div class="rb" style="top:958px"></div>
<svg class="a" style="left:2824.5px;top:969.5px" width="40" height="50"><g transform="translate(20,25)"><ellipse cx="0" cy="0" rx="14.3" ry="20.5" fill="none" stroke="#13b04a" stroke-width="3.3"/><path d="M-5 -4 A8 10 0 0 0 3 8" fill="none" stroke="#13b04a" stroke-width="2.8" stroke-linecap="round"/><path d="M0 14 L7 7 L1 3 Z" fill="#13b04a"/><path d="M5 5 A8 10 0 0 0 -2 -8" fill="none" stroke="#13b04a" stroke-width="2.8" stroke-linecap="round"/><path d="M0 -14 L-7 -7 L-1 -3 Z" fill="#13b04a"/></g></svg>
<div class="rbt" style="top:1028px">复位</div>
<div class="rb" style="top:1136px"></div>
<svg class="a" style="left:2824.5px;top:1147.5px" width="40" height="50"><g transform="translate(20,25)"><ellipse cx="0" cy="0" rx="14.3" ry="20.5" fill="none" stroke="#e53935" stroke-width="3.3"/><path d="M-3 7 L-3 0 A3 3.5 0 0 1 3 0 L3 7 Z" fill="#e53935"/><rect x="-5.5" y="6.5" width="11" height="3.5" fill="#e53935"/><path d="M0 -10 L0 -6 M-6 -7 L-4.5 -4.5 M6 -7 L4.5 -4.5" stroke="#e53935" stroke-width="1.8" stroke-linecap="round"/></g></svg>
<div class="rbt" style="top:1206px">清除报警</div>
<div class="a" style="left:1420px;top:1146px;width:1348px;height:100px;background:linear-gradient(#fdfdfd,#f8f8f8 50%,#f2f2f2)"></div>
<svg class="a" style="left:1425px;top:1152px" width="6" height="90"><line x1="3" y1="1" x2="3" y2="88" stroke="#b0b0b0" stroke-width="2.5" stroke-dasharray="2.5 3.5"/></svg>
<div class="wb" style="left:1439px;width:119.5px"></div>
<div class="wbt" style="left:1444.5px">点焊</div>
<div class="wb" style="left:1564.5px;width:119.5px"></div>
<div class="wbt" style="left:1570.0px">拖焊起点</div>
<div class="wb" style="left:1690.5px;width:125.5px"></div>
<div class="wbt" style="left:1696.0px">拖焊直线</div>
<div class="wb" style="left:1822px;width:119.5px"></div>
<div class="wbt" style="left:1827.5px">拖焊圆弧</div>
<div class="wb" style="left:1948px;width:119.5px"></div>
<div class="wbt" style="left:1953.5px">拖焊终点</div>
<div class="wb" style="left:2074px;width:119.5px"></div>
<div class="wbt" style="left:2079.5px">空移</div>
<svg class="a" style="left:0;top:0;width:2200px;height:1250px">
<g fill="#4677e0" stroke="#4677e0">
<path d="M1502 1171 L1495 1181 L1509 1181 Z" stroke="none"/>
<line x1="1502" y1="1180" x2="1502" y2="1200" stroke-width="3.5" stroke-dasharray="4 3"/>
<path d="M1495 1199 L1509 1199 L1502 1208 Z" stroke="none"/>
<circle cx="1502" cy="1218" r="7.5" stroke="none"/>
<line x1="1609.5" y1="1176" x2="1609.5" y2="1199" stroke-width="3" stroke-dasharray="4 3"/>
<path d="M1603 1198 L1616 1198 L1609.5 1207 Z" stroke="none"/>
<circle cx="1609.5" cy="1218" r="7.5" stroke="none"/>
<line x1="1610" y1="1218" x2="1654" y2="1218" stroke-width="4.5" stroke-linecap="round"/>
<line x1="1728" y1="1201.5" x2="1779.5" y2="1201.5" stroke-width="4.5" stroke-linecap="round"/>
<circle cx="1753" cy="1201.5" r="8" stroke="none"/>
<path d="M1861.5 1209 Q1863 1190 1885.5 1186 Q1908 1190 1909 1209" fill="none" stroke-width="4.5"/>
<circle cx="1885.5" cy="1187" r="8" stroke="none"/>
<circle cx="1861.5" cy="1209" r="4.5" stroke="none"/>
<circle cx="1909.5" cy="1209" r="4.5" stroke="none"/>
<line x1="1986" y1="1199.5" x2="2030" y2="1199.5" stroke-width="4.5" stroke-linecap="round"/>
<circle cx="2030.5" cy="1199" r="7.5" stroke="none"/>
<g stroke="none"><circle cx="2116.5" cy="1198.5" r="2.5"/><circle cx="2125.2" cy="1198.5" r="2.5"/><circle cx="2133.9" cy="1198.5" r="2.5"/><circle cx="2142.6" cy="1198.5" r="2.5"/><circle cx="2151.3" cy="1198.5" r="2.5"/><circle cx="2160" cy="1198.5" r="2.5"/></g>
</g></svg>
<div class="a" style="left:1423px;top:1255px;width:123px;height:45px;background:#fff;border:1px solid #d9d9d9;border-bottom:none"></div>
<div class="mtab" style="left:1546px;top:1258.5px;width:114.5px;height:38.5px"></div>
<div class="mtab" style="left:1660.5px;top:1258.5px;width:115.5px;height:38.5px"></div>
<div class="mtt" style="left:1435.5px;top:1262px;font-size:24.5px">运动日志</div>
<div class="mtt" style="left:1553.5px;top:1264px;font-size:25px;transform:scaleY(1.04)">生产数据</div>
<div class="mtt" style="left:1671px;top:1264px;font-size:25px;transform:scaleY(1.04)">视觉结果</div>
<div class="a" style="left:1423px;top:1297px;width:806.5px;height:465px;background:#fff;border:1px solid #d9d9d9"></div>
<div class="a" style="left:1433.5px;top:1306px;width:787.5px;height:445px;background:#f0f0f0;border-top:2px solid #6b6b6b;border-left:2px solid #6b6b6b;border-right:1px solid #e3e3e3;border-bottom:1px solid #e3e3e3"></div>
<div class="a" style="left:1424px;top:1292px;width:121px;height:6px;background:#fff"></div>
<div class="a" style="left:1525px;top:1565px;width:1.5px;height:97px;background:#fff"></div>
<div class="a t" style="left:1438px;top:1359px;font-family:'Liberation Serif',serif;font-weight:bold;font-size:30px;transform:scaleY(1.22);transform-origin:0 0"><span style="display:inline-block;width:16px;text-align:center">1</span><span style="display:inline-block;width:16px;text-align:center">5</span><span style="display:inline-block;width:16px;text-align:center">:</span><span style="display:inline-block;width:16px;text-align:center">1</span><span style="display:inline-block;width:16px;text-align:center">1</span><span style="display:inline-block;width:16px;text-align:center">:</span><span style="display:inline-block;width:16px;text-align:center">3</span><span style="display:inline-block;width:16px;text-align:center">5</span><span style="display:inline-block;width:16px;text-align:center">:</span><span style="display:inline-block;width:16px;text-align:center">3</span><span style="display:inline-block;width:16px;text-align:center">4</span><span style="display:inline-block;width:16px;text-align:center">1</span></div>
<div class="a t" style="left:1650px;top:1361px;font-size:30.5px;-webkit-text-stroke:0.7px #000">系统开始回原点</div>
<div class="a t" style="left:1438px;top:1403.5px;font-family:'Liberation Serif',serif;font-weight:bold;font-size:30px;transform:scaleY(1.22);transform-origin:0 0"><span style="display:inline-block;width:16px;text-align:center">1</span><span style="display:inline-block;width:16px;text-align:center">5</span><span style="display:inline-block;width:16px;text-align:center">:</span><span style="display:inline-block;width:16px;text-align:center">1</span><span style="display:inline-block;width:16px;text-align:center">1</span><span style="display:inline-block;width:16px;text-align:center">:</span><span style="display:inline-block;width:16px;text-align:center">3</span><span style="display:inline-block;width:16px;text-align:center">7</span><span style="display:inline-block;width:16px;text-align:center">:</span><span style="display:inline-block;width:16px;text-align:center">1</span><span style="display:inline-block;width:16px;text-align:center">5</span><span style="display:inline-block;width:16px;text-align:center">3</span></div>
<div class="a t" style="left:1650px;top:1405.5px;font-size:30.5px;-webkit-text-stroke:0.7px #000">系统回原点完成</div>
<div class="a" style="left:2234.5px;top:1254.5px;width:110.5px;height:45px;background:#fff;border:1px solid #d9d9d9;border-bottom:none"></div>
<div class="mtab" style="left:2345px;top:1257.5px;width:103px;height:37px"></div>
<div class="mtab" style="left:2448px;top:1257.5px;width:106.5px;height:37px"></div>
<div class="mtab" style="left:2554.5px;top:1257.5px;width:89.5px;height:37px"></div>
<div class="mtab" style="left:2644px;top:1257.5px;width:103.5px;height:37px"></div>
<div class="mtt" style="left:2246px;top:1261.5px;font-size:21.5px">手动控制</div>
<div class="mtt" style="left:2352px;top:1264.5px;font-size:21.5px">送锡控制</div>
<div class="mtt" style="left:2459px;top:1264.5px;font-size:21.5px">光源调节</div>
<div class="mtt" style="left:2566px;top:1264.5px;font-size:21.5px">流水线</div>
<div class="mtt" style="left:2655px;top:1264.5px;font-size:21.5px">回流设置</div>
<div class="a" style="left:2234.5px;top:1294.5px;width:556.5px;height:468.5px;background:#fff;border:1px solid #d9d9d9"></div>
<div class="a" style="left:2239.5px;top:1297.5px;width:547px;height:461px;background:#f0f0f0;border-top:1px solid #e8e8e8"></div>
<div class="a" style="left:2235.5px;top:1290px;width:109px;height:7px;background:#fff"></div>
<div class="ab" style="left:2410px;top:1377.5px;width:50.5px;height:60.0px"></div>
<div class="ab" style="left:2570px;top:1379.5px;width:50.5px;height:60.0px"></div>
<div class="ab" style="left:2380px;top:1461.5px;width:45.5px;height:55.0px"></div>
<div class="ab" style="left:2453px;top:1461.5px;width:49px;height:55.0px"></div>
<div class="ab" style="left:2410px;top:1542px;width:50.5px;height:61.5px"></div>
<div class="ab" style="left:2570px;top:1542px;width:50.5px;height:61.5px"></div>
<div class="a" style="left:2520.5px;top:1461px;width:55px;height:56px;background:#fff"></div>
<div class="a" style="left:2601px;top:1461px;width:45px;height:56px;background:#fff"></div>
<svg class="a" style="left:0;top:0;width:2700px;height:1620px">
<path d="M2436 1384 L2417.5 1407 L2429.5 1407 L2429.5 1428.5 L2442.5 1428.5 L2442.5 1407 L2454.5 1407 Z" fill="#0000e6"/>
<path d="M2596 1388.5 L2577 1411 L2589 1411 L2589 1433.5 L2602.5 1433.5 L2602.5 1411 L2614.5 1411 Z" fill="#00007e"/>
<path d="M2386.5 1489 L2403.5 1469.5 L2403.5 1482.5 L2420 1482.5 L2420 1496 L2403.5 1496 L2403.5 1509 Z" fill="#0000e6"/>
<path d="M2497.5 1489 L2478.5 1469.5 L2478.5 1482.5 L2460 1482.5 L2460 1496 L2478.5 1496 L2478.5 1509 Z" fill="#0000e6"/>
<path d="M2436 1596.5 L2417.5 1573 L2429.5 1573 L2429.5 1550 L2442.5 1550 L2442.5 1573 L2454.5 1573 Z" fill="#0000e6"/>
<path d="M2596 1596.5 L2577 1573 L2589 1573 L2589 1550 L2602.5 1550 L2602.5 1573 L2614.5 1573 Z" fill="#00007e"/>
<g fill="#fff" font-family="Liberation Sans" font-weight="bold" font-size="17" text-anchor="middle">
<text x="2436" y="1414" transform="translate(0,-142) scale(1,1.1)">Y</text>
<text x="2596" y="1419" transform="translate(0,-143) scale(1,1.1)">Z</text>
<text x="2399" y="1495">X</text>
<text x="2484" y="1495">X</text>
<text x="2436" y="1581" transform="translate(0,-158) scale(1,1.1)">Y</text>
<text x="2596" y="1582" transform="translate(0,-158) scale(1,1.1)">Z</text>
</g>
<g fill="none" stroke="#1a7fd2" stroke-width="3.5">
<path d="M2536.5 1481.5 A18 15.5 0 1 0 2561 1480"/>
<path d="M2612 1480.5 A16 15.5 0 1 0 2636.5 1481.5"/>
</g>
<path d="M2528 1475 L2543 1474 L2543 1488 Z" fill="#1a7fd2"/>
<path d="M2645 1475 L2630 1474 L2630 1488 Z" fill="#1a7fd2"/>
<g fill="#1a7fd2" font-family="Liberation Sans" font-size="13" text-anchor="middle"><text x="2548" y="1499">A</text><text x="2624.5" y="1499">A</text></g>
</svg>
<div class="a t" style="left:2398px;top:1651px;font-size:22px;transform:scaleY(1.1);transform-origin:0 0">慢速</div>
<div class="a" style="left:2480.5px;top:1639px;width:81.5px;height:48px;background:#1e90ff"></div>
<div class="a t" style="left:2499.5px;top:1651px;font-size:22px;transform:scaleY(1.1);transform-origin:0 0">中速</div>
<div class="a t" style="left:2599px;top:1651px;font-size:22px;transform:scaleY(1.1);transform-origin:0 0">快速</div>
<svg class="a" style="left:2798px;top:1254px" width="104" height="6"><line x1="2" y1="3" x2="101" y2="3" stroke="#b5b5b5" stroke-width="2.5" stroke-dasharray="2.5 3.2"/></svg>
<div class="a" style="left:2795.5px;top:1262.5px;width:113px;height:42.5px;background:#fff"></div>
<div class="a" style="left:2885px;top:1263.5px;width:23px;height:40.5px;background:#f4f4f4"></div>
<div class="a t" style="left:2803px;top:1268px;font-size:25px;font-weight:bold;transform:scaleY(1.05);transform-origin:0 0;width:65px;overflow:hidden;font-family:'Liberation Serif',serif">左工位</div>
<svg class="a" style="left:2890px;top:1280px" width="12" height="8"><path d="M1 1 L10 1 L5.5 6 Z" fill="#222"/></svg>
<div class="a" style="left:2794.5px;top:1318.5px;width:120px;height:49px;border:1.5px solid #2a74d6;background:linear-gradient(#fafafa 0%,#f0f0f0 35%,#d8d8d8 70%,#c3c3c3 92%,#d9d9d9 100%)"></div>
<div class="a t" style="left:2816px;top:1329px;font-size:25px;font-weight:bold;transform:scaleY(1.05);transform-origin:0 0;letter-spacing:18px">连动</div>
<div class="a" style="left:2794.5px;top:1480px;width:120px;height:58px;border-left:1.5px solid #b0b0b0;background:linear-gradient(#fafafa 0%,#eeeeee 40%,#d4d4d4 85%,#e0e0e0 100%)"></div>
<div class="a t" style="left:2797px;top:1504px;font-size:24px;font-weight:bold;transform:scaleY(1.05);transform-origin:0 0">换焊头位</div>
<div class="a" style="left:2794.5px;top:1545.5px;width:120px;height:50.5px;border-left:1.5px solid #b0b0b0;border-top:1.5px solid #d0d0d0;background:linear-gradient(#fdfdfd 0%,#f2f2f2 40%,#d9d9d9 80%,#e4e4e4 100%)"></div>
<div class="a t" style="left:2809px;top:1556px;font-size:26px;font-weight:bold;transform:scaleY(1.0);transform-origin:0 0">待机位</div>
<div class="a" style="left:2796px;top:1377.5px;width:118px;height:41px;background:#fff;border:2px solid #0a5fcc"></div>
<div class="a" style="left:2884px;top:1379.5px;width:30px;height:37px;background:#80b6ea"></div>
<svg class="a" style="left:2890px;top:1394px" width="12" height="8"><path d="M1 1 L10 1 L5.5 6 Z" fill="#222"/></svg>
<div class="a t" style="left:2803px;top:1382.5px;font-size:25px;-webkit-text-stroke:0.4px #000;transform:scaleY(1.12);transform-origin:0 0">焊枪<span style="font-family:'Liberation Mono';font-size:24px">1</span></div>
<div class="a" style="left:2796px;top:1418px;width:118px;height:92px;background:#fff;border-left:1.5px solid #0a5fcc"></div>
<div class="a" style="left:2797px;top:1418px;width:117px;height:32px;background:#1470d6"></div>
<div class="a t" style="left:2800px;top:1420px;font-size:25px;color:#fff;-webkit-text-stroke:0.4px #fff;transform:scaleY(1.14);transform-origin:0 0">焊枪<span style="font-family:'Liberation Mono';font-size:24px">1</span></div>
<div class="a t" style="left:2800px;top:1450px;font-size:25px;color:#000;-webkit-text-stroke:0.4px #000;transform:scaleY(1.14);transform-origin:0 0">焊枪<span style="font-family:'Liberation Mono';font-size:24px">2</span></div>
<div class="a t" style="left:2800px;top:1478.5px;font-size:25px;color:#000;-webkit-text-stroke:0.4px #000;transform:scaleY(1.14);transform-origin:0 0">焊枪<span style="font-family:'Liberation Mono';font-size:24px">3</span></div>
<div class="a" style="left:2716.5px;top:1314.5px;width:195px;height:194.5px;border:4.2px solid #e8463d;border-radius:5px"></div>
<div class="a t" style="left:2400px;top:1777px;font-family:'Liberation Mono';font-size:21px;transform:scaleY(1.3);transform-origin:0 0">Cmn</div>
<div class="a t" style="left:2466.5px;top:1765px;font-size:23px;color:#1e8cf5;font-weight:bold;transform:scaleY(1.1);transform-origin:0 0">软件运行<span style="display:inline-block;width:11.5px;text-align:center;font-family:Liberation Sans;font-size:20px;-webkit-text-stroke:0;transform:scaleY(1.15)">0</span><span style="display:inline-block;width:15px"></span>天</div>
<div class="a t" style="left:2650.5px;top:1765px;font-size:23px;color:#1e8cf5;font-weight:bold;transform:scaleY(1.1);transform-origin:0 0">电脑运行<span style="display:inline-block;width:11.5px;text-align:center;font-family:Liberation Sans;font-size:20px;-webkit-text-stroke:0;transform:scaleY(1.15)">0</span><span style="display:inline-block;width:15px"></span>天</div>
</div>
</body></html>
